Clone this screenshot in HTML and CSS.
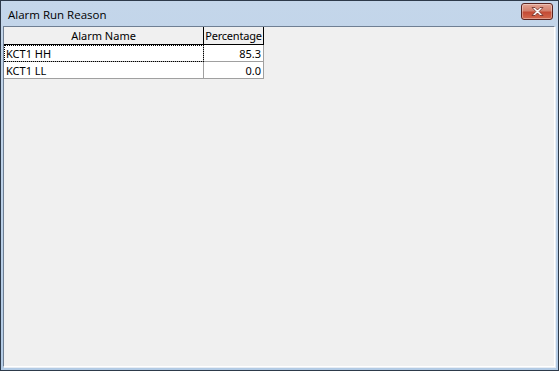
FILE: index.html
```html
<!DOCTYPE html>
<html lang="en">
  <head>
    <meta charset="UTF-8" />
    <title>Alarm Run Reason</title>
    <link rel="stylesheet" href="styles.css">
  </head>
  <body>
    <div class="window">
      <div class="titlebar">
        <span class="title">Alarm Run Reason</span>
        <button class="close-btn" aria-label="Close">
          <svg width="15" height="11" viewBox="0 0 15 11">
            <path d="M2 1.5 L5 1.5 L7.5 4 L10 1.5 L13 1.5 L9.2 5.5 L13 9.5 L10 9.5 L7.5 7 L5 9.5 L2 9.5 L5.8 5.5 Z" fill="#fff" stroke="#6a2a22" stroke-width="0.8" stroke-linejoin="round"/>
          </svg>
        </button>
      </div>
      <div class="client">
        <table class="grid">
          <thead>
            <tr>
              <th class="col-name">Alarm Name</th>
              <th class="col-pct">Percentage</th>
            </tr>
          </thead>
          <tbody>
            <tr>
              <td class="focus">KCT1 HH</td>
              <td class="num">85.3</td>
            </tr>
            <tr>
              <td>KCT1 LL</td>
              <td class="num">0.0</td>
            </tr>
          </tbody>
        </table>
      </div>
    </div>
  </body>
</html>
```

FILE: styles.css
```css
html,
body {
  margin: 0;
  padding: 0;
  background: #fff;
}

.window {
  width: 559px;
  height: 371px;
  box-sizing: border-box;
  border: 1px solid #2d3a4a;
  background: linear-gradient(to bottom, #c4d6ea, #b3cbe5);
  padding: 0 3px 3px 2px;
  display: flex;
  flex-direction: column;
}

.titlebar {
  height: 25px;
  display: flex;
  align-items: center;
  justify-content: space-between;
  padding-left: 5px;
  flex-shrink: 0;
}

.title {
  font-family: "Open Sans", "Noto Sans", sans-serif;
  font-size: 11.5px;
  color: #000;
  margin-top: 1px;
}

.close-btn {
  width: 32px;
  height: 17px;
  margin: -5px 2px 0 0;
  padding: 0;
  border: 1px solid #5a2420;
  border-radius: 3px;
  background: linear-gradient(to bottom, #e4a493 0%, #d3806d 45%, #c44a34 55%, #d46a4f 100%);
  box-shadow: inset 0 0 0 1px rgba(255, 255, 255, 0.35);
  display: flex;
  align-items: center;
  justify-content: center;
}

.client {
  flex: 1;
  background: #f0f0f0;
  border: 1px solid #6f7f93;
  border-right-color: #fff;
  border-bottom-color: #fff;
  box-shadow: 1px 1px 0 #e8edf3;
}

.grid {
  border-collapse: collapse;
  table-layout: fixed;
  width: 258px;
  font-family: "Noto Sans", "DejaVu Sans", sans-serif;
  font-size: 11px;
  color: #000;
  background: #fff;
}

.grid th {
  font-weight: normal;
  height: 17px;
  padding: 0;
  white-space: nowrap;
  overflow: hidden;
  background: #f0f0f0;
  border: 1px solid #000;
  border-top: none;
  border-left: none;
}

.grid .col-name {
  width: 199px;
}

.grid .col-pct {
  width: 59px;
  letter-spacing: -0.2px;
}

.grid td {
  height: 16px;
  padding: 0 2px;
  border-right: 1px solid #a0a0a0;
  border-bottom: 1px solid #a0a0a0;
}

.grid td.num {
  text-align: right;
}

.grid td.focus {
  outline: 1px dotted #000;
  outline-offset: -1px;
}
```
